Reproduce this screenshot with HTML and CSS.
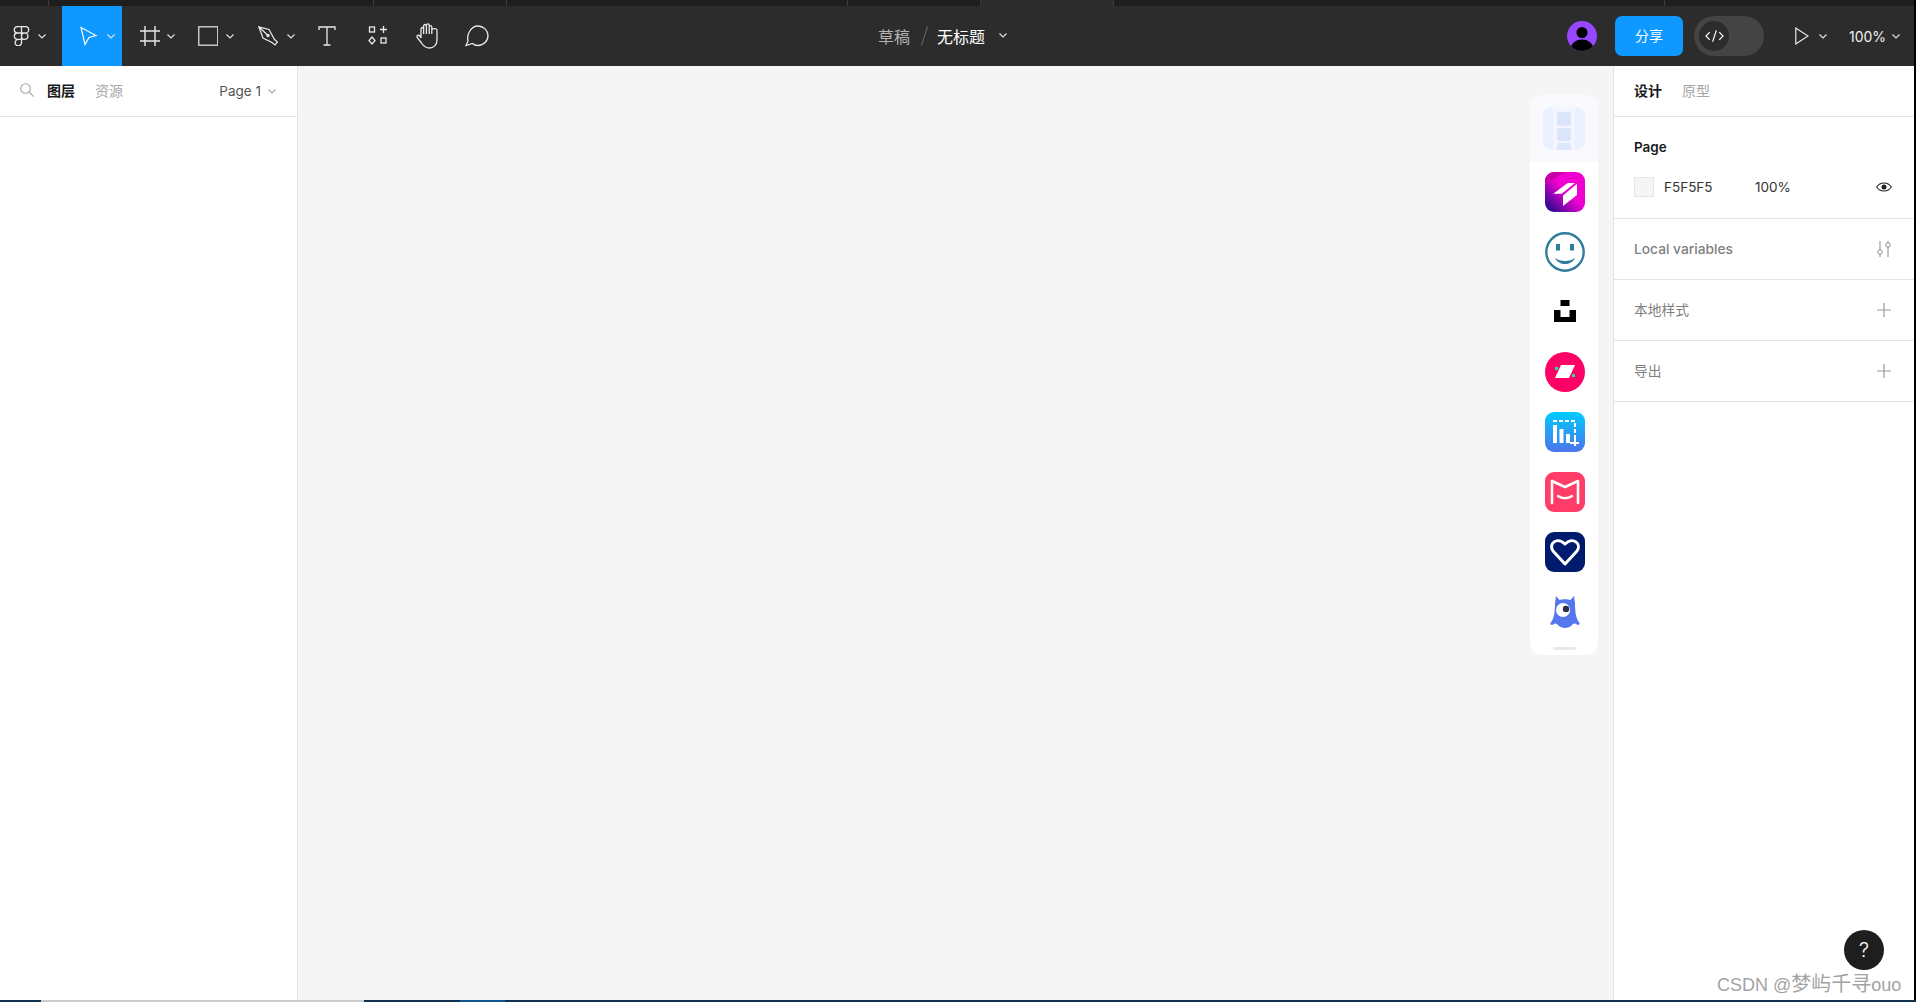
FILE: index.html
```html
<!DOCTYPE html>
<html lang="en">
<head>
    <meta charset="UTF-8">
    <meta name="viewport" content="width=device-width, initial-scale=1.0">
    <title>无标题 - Figma</title>
    <link rel="stylesheet" href="styles.css">
</head>
<body>
    <div class="window">
        <!-- browser tabs peeking out at the top -->
        <div class="tab-strip">
            <div class="strip-tab tab-a"></div>
            <div class="strip-tab tab-b"></div>
            <div class="strip-tab tab-c"></div>
            <div class="strip-tab tab-d"></div>
            <div class="strip-tab tab-c"></div>
            <div class="strip-tab tab-c tab-active"></div>
            <div class="strip-tab tab-e"></div>
            <div class="strip-tab tab-f"></div>
        </div>

        <header class="toolbar">
            <div class="tools">
                <div class="tool tool-logo">
                    <svg class="icon" viewBox="0 0 20 20" fill="none" stroke="#e8e8e8" stroke-width="1.3">
                        <path d="M6.500 .6H10.500V7H6.500A3.200 3.200 0 0 1 6.500 .6ZM10.500 .6H14.500A3.200 3.200 0 0 1 14.500 7H10.500ZM6.500 7H10.500V13.400H6.500A3.200 3.200 0 0 1 6.500 7ZM17 10.200A3.250 3.250 0 1 1 10.500 10.200A3.250 3.250 0 1 1 17 10.200ZM7.250 13.400H10.500V16.400A3.200 3.200 0 1 1 7.250 13.400Z"/>
                    </svg>
                    <svg class="chevron" viewBox="0 0 8 5"><path d="M.5.5 4 4 7.5.5"/></svg>
                </div>
                <div class="tool tool-move">
                    <svg class="icon" viewBox="0 0 20 20" fill="none" stroke="#fff" stroke-width="1.2">
                        <path d="M3 1.5 18 9.5 11 11.5 7 18.5Z"/>
                    </svg>
                    <svg class="chevron" viewBox="0 0 8 5"><path d="M.5.5 4 4 7.5.5"/></svg>
                </div>
                <div class="tool tool-frame">
                    <svg class="icon" viewBox="0 0 20 20" fill="none" stroke="#e8e8e8" stroke-width="1.4">
                        <path d="M5 0V20M15 0V20M0 5H20M0 15H20"/>
                    </svg>
                    <svg class="chevron" viewBox="0 0 8 5"><path d="M.5.5 4 4 7.5.5"/></svg>
                </div>
                <div class="tool tool-shape">
                    <svg class="icon" viewBox="0 0 20 20" fill="none" stroke="#c4c4c4" stroke-width="1.5">
                        <rect x="0.75" y="0.75" width="19" height="18.5"/>
                    </svg>
                    <svg class="chevron" viewBox="0 0 8 5"><path d="M.5.5 4 4 7.5.5"/></svg>
                </div>
                <div class="tool tool-pen">
                    <svg class="icon" viewBox="0 0 20 20" fill="none" stroke="#e8e8e8" stroke-width="1.2">
                        <path d="M.8.8 11 3.500 16.500 13.500 19.500 16 17 19 14 16.500 5 12 .8.8ZM.8.8 9.500 9"/>
                        <circle cx="10" cy="9.500" r="1.100" fill="#e8e8e8"/>
                    </svg>
                    <svg class="chevron" viewBox="0 0 8 5"><path d="M.5.5 4 4 7.5.5"/></svg>
                </div>
                <div class="tool tool-single tool-text">
                    <svg class="icon" viewBox="0 0 20 20" fill="none" stroke="#e8e8e8" stroke-width="1.3">
                        <path d="M2 4V1H18V4M10 1V19M6.500 19H13.500"/>
                    </svg>
                </div>
                <div class="tool tool-single tool-comps">
                    <svg class="icon" viewBox="0 0 20 20" fill="none" stroke="#e8e8e8" stroke-width="1.3">
                        <rect x="1.500" y="1" width="5" height="5"/>
                        <rect x="13" y="12" width="5" height="5"/>
                        <path d="M15.500 0V7M12 3.500H19M4 11 7 14.500 4 18 1 14.500Z"/>
                    </svg>
                </div>
                <div class="tool tool-single tool-hand">
                    <svg class="icon icon-hand" viewBox="0 0 22 26" fill="none" stroke="#e8e8e8" stroke-width="1.3">
                        <path d="M5 15V6C5 4 7.600 4 7.600 6V11M7.600 11V3C7.600 1 10.400 1 10.400 3V11M10.400 11V2.200C10.400 .4 13.200 .4 13.200 2.200V11M13.200 11V4C13.200 2.200 15.800 2.200 15.800 4V11M15.800 11V7C15.800 5.400 21 4.800 21 7.500V17C21 22 17.500 25 13.500 25 9.500 25 7.500 23 5.500 20L1.200 14.500C.2 12.500 2.600 11.500 4 13L5 15"/>
                    </svg>
                </div>
                <div class="tool tool-single tool-comment">
                    <svg class="icon icon-comment" viewBox="0 0 24 22" fill="none" stroke="#e8e8e8" stroke-width="1.3">
                        <path d="M1 20.500 3 16C1.500 10 5.500 1 13 1 18.500 1 23 5.500 23 10.500 23 16 18.500 20.500 13 20.500 10.500 20.500 8.500 19.500 7.500 18.500Z"/>
                    </svg>
                </div>
            </div>

            <div class="file-title">
                <span class="crumb-folder">草稿</span>
                <span class="crumb-slash"></span>
                <span class="crumb-name">无标题</span>
                <svg class="chevron" viewBox="0 0 8 5"><path d="M.5.5 4 4 7.5.5"/></svg>
            </div>

            <div class="actions">
                <svg class="avatar" viewBox="0 0 30 30">
                    <defs><clipPath id="avatarClip"><circle cx="15" cy="15" r="15"/></clipPath></defs>
                    <circle cx="15" cy="15" r="15" fill="#9747ff"/>
                    <g clip-path="url(#avatarClip)">
                        <circle cx="15" cy="11.500" r="5.500" fill="#000"/>
                        <ellipse cx="15" cy="27" rx="11" ry="8.500" fill="#000"/>
                    </g>
                </svg>
                <button class="share-btn">分享</button>
                <div class="dev-toggle">
                    <div class="dev-knob">
                        <svg class="dev-icon" viewBox="0 0 20 12" fill="none" stroke="#fff" stroke-width="1.200">
                            <path d="M5 2 1 6 5 10M15 2 19 6 15 10M12 0 8 12"/>
                        </svg>
                    </div>
                </div>
                <div class="present">
                    <svg class="play-icon" viewBox="0 0 14 18" fill="none" stroke="#e8e8e8" stroke-width="1.200">
                        <path d="M.8 1 13 9 .8 17Z"/>
                    </svg>
                    <svg class="chevron" viewBox="0 0 8 5"><path d="M.5.5 4 4 7.5.5"/></svg>
                </div>
                <div class="zoom-level">
                    <span class="zoom-text">100%</span>
                    <svg class="chevron" viewBox="0 0 8 5"><path d="M.5.5 4 4 7.5.5"/></svg>
                </div>
            </div>
        </header>

        <main class="workspace">
            <aside class="left-panel">
                <div class="panel-head">
                    <svg class="search-icon" viewBox="0 0 14 14" fill="none" stroke="#a6a6a6" stroke-width="1.100">
                        <circle cx="5.500" cy="5.500" r="4.800"/>
                        <path d="M9 9 13.600 13.600"/>
                    </svg>
                    <span class="tab-label tab-on">图层</span>
                    <span class="tab-label tab-off">资源</span>
                    <div class="page-pick">
                        <span>Page 1</span>
                        <svg class="chevron chevron-grey" viewBox="0 0 8 5"><path d="M.5.5 4 4 7.5.5"/></svg>
                    </div>
                </div>
            </aside>

            <section class="canvas">
                <div class="plugin-bar">
                    <div class="plugin plugin-first">
                        <svg class="plugin-icon icon-wide" viewBox="0 0 42 43">
                            <rect width="42" height="43" rx="9" fill="#e9f0fe"/>
                            <rect x="10" width="22" height="43" fill="#f3f6fe"/>
                            <rect x="14" y="5" width="14" height="14" rx="3" fill="#dbe6fd"/>
                            <rect x="14" y="21" width="14" height="13" rx="3" fill="#dbe6fd"/>
                            <path d="M14 43V39C14 37 15 36 17 36H25C27 36 28 37 28 39V43Z" fill="#dbe6fd"/>
                        </svg>
                    </div>
                    <div class="plugin">
                        <svg class="plugin-icon" viewBox="0 0 40 40">
                            <defs>
                                <linearGradient id="magenta" x1="0.9" y1="0.1" x2="0.1" y2="0.95">
                                    <stop offset="0.45" stop-color="#f000d0"/>
                                    <stop offset="1" stop-color="#2a0a90"/>
                                </linearGradient>
                            </defs>
                            <rect width="40" height="40" rx="9" fill="url(#magenta)"/>
                            <path d="M0 12 0 9A9 9 0 0 1 9 0H20Z" fill="#c800a8"/>
                            <path d="M8.300 21.700 22.700 11H30L16.700 21.700ZM32 11.700V23L18 34V23.500Z" fill="#fff"/>
                        </svg>
                    </div>
                    <div class="plugin">
                        <svg class="plugin-icon" viewBox="0 0 40 40" fill="none" stroke="#2e7d9c">
                            <circle cx="20" cy="20" r="18.700" stroke-width="2.400"/>
                            <path d="M13 12V18.500M27 12V18.500" stroke-width="4"/>
                            <path d="M10 26C15 30 25 30 30 26 26 34 14 34 10 26Z" fill="#2e7d9c" stroke="none"/>
                        </svg>
                    </div>
                    <div class="plugin">
                        <svg class="plugin-icon" viewBox="0 0 40 40">
                            <path d="M15.500 8H24.500V14H15.500ZM9 18H15.500V25H24.500V18H31V30H9Z" fill="#000"/>
                        </svg>
                    </div>
                    <div class="plugin">
                        <svg class="plugin-icon" viewBox="0 0 40 40">
                            <circle cx="20" cy="20" r="20" fill="#ff0066"/>
                            <path d="M16 13H30L24 26H10Z" fill="#fff"/>
                            <rect x="10" y="15" width="3" height="3" fill="#1fe6a0"/>
                            <rect x="27" y="22" width="3" height="3" fill="#1fe6a0"/>
                        </svg>
                    </div>
                    <div class="plugin">
                        <svg class="plugin-icon" viewBox="0 0 40 40">
                            <defs>
                                <linearGradient id="skyblue" x1="0.5" y1="0" x2="0.5" y2="1">
                                    <stop offset="0" stop-color="#00ccff"/>
                                    <stop offset="1" stop-color="#4d74ea"/>
                                </linearGradient>
                            </defs>
                            <rect width="40" height="40" rx="9" fill="url(#skyblue)"/>
                            <path d="M8 9H30V25" fill="none" stroke="#fff" stroke-width="2" stroke-dasharray="4 2"/>
                            <path d="M8 13H12V31H8ZM14.500 17H18.500V31H14.500ZM21 22H25V31H21Z" fill="#fff"/>
                            <path d="M30 25V34M25 31H34" stroke="#fff" stroke-width="2"/>
                        </svg>
                    </div>
                    <div class="plugin">
                        <svg class="plugin-icon" viewBox="0 0 40 40" fill="none" stroke="#fff" stroke-linecap="round">
                            <rect width="40" height="40" rx="9" fill="#ff3d68" stroke="none"/>
                            <path d="M7 31V9L20 15 33 9V31" stroke-width="2.600" stroke-linejoin="round"/>
                            <path d="M13 24C17 27 23 27 27 24" stroke-width="2.400"/>
                        </svg>
                    </div>
                    <div class="plugin">
                        <svg class="plugin-icon" viewBox="0 0 40 40">
                            <rect width="40" height="40" rx="9" fill="#001a6e"/>
                            <path d="M20 32 8 19C3 12 12 4 20 12 28 4 37 12 32 19Z" fill="none" stroke="#fff" stroke-width="3" stroke-linejoin="round"/>
                        </svg>
                    </div>
                    <div class="plugin">
                        <svg class="plugin-icon" viewBox="0 0 40 40">
                            <path d="M11 4 14.500 8C17 7 23 7 25.500 8L29 4 30 11C30 20 31 27 34.500 31 35 33 33 33.500 31 32 29 31 28 32 26 34 23 36.500 17 36.500 14 34 12 32 11 31 9 32 7 33.500 5 33 5.500 31 9 27 10 20 10 11Z" fill="#5577ee"/>
                            <circle cx="18" cy="18" r="7" fill="#fff"/>
                            <circle cx="21" cy="17" r="3.200" fill="#2b2f45"/>
                        </svg>
                    </div>
                    <div class="plugin-handle"></div>
                </div>
            </section>

            <aside class="right-panel">
                <div class="panel-head panel-head-right">
                    <span class="tab-label tab-on">设计</span>
                    <span class="tab-label tab-off">原型</span>
                </div>
                <div class="page-section">
                    <div class="section-title">Page</div>
                    <div class="fill-row">
                        <div class="swatch"></div>
                        <span class="fill-hex">F5F5F5</span>
                        <span class="fill-opacity">100%</span>
                        <svg class="eye-icon" viewBox="0 0 16 10">
                            <path d="M.7 5C4 -.3 12 -.3 15.300 5 12 10.300 4 10.300 .7 5Z" fill="none" stroke="#222" stroke-width="1.100"/>
                            <circle cx="8" cy="5" r="2.500" fill="#222"/>
                        </svg>
                    </div>
                </div>
                <div class="side-row">
                    <span class="side-label">Local variables</span>
                    <svg class="row-icon" viewBox="0 0 16 18" fill="none" stroke="#888" stroke-width="1.100">
                        <path d="M3.500 0V10M3.500 15V18M12.500 0V2M12.500 7V18"/>
                        <circle cx="3.500" cy="12.500" r="2.500"/>
                        <circle cx="12.500" cy="4.500" r="2.500"/>
                    </svg>
                </div>
                <div class="side-row">
                    <span class="side-label label-cn">本地样式</span>
                    <svg class="row-icon" viewBox="0 0 16 16" stroke="#999" stroke-width="1.200"><path d="M8 1V15M1 8H15"/></svg>
                </div>
                <div class="side-row">
                    <span class="side-label label-cn">导出</span>
                    <svg class="row-icon" viewBox="0 0 16 16" stroke="#999" stroke-width="1.200"><path d="M8 1V15M1 8H15"/></svg>
                </div>
            </aside>
        </main>

        <div class="help-btn">?</div>
        <div class="watermark">CSDN @<span class="watermark-cn">梦屿千寻</span>ouo</div>
    </div>

    <!-- bit of the taskbar showing under the window -->
    <div class="bottom-strip">
        <div class="bottom-a"></div>
        <div class="bottom-b"></div>
        <div class="bottom-c"></div>
        <div class="bottom-d"></div>
        <div class="bottom-e"></div>
    </div>
</body>
</html>
```

FILE: styles.css
```css
* {
    box-sizing: border-box;
}

html, body {
    margin: 0;
    height: 100%;
}

body {
    display: flex;
    flex-direction: column;
    overflow: hidden;
    background: #000;
    font-family: Inter, "Noto Sans CJK SC", sans-serif;
}

.window {
    position: relative;
    flex: 1;
    display: flex;
    flex-direction: column;
    min-height: 0;
    margin-right: 2px;
}

/* top strip */
.tab-strip {
    display: flex;
    height: 6px;
    flex: none;
    background: #1e1e1e;
}

.strip-tab {
    flex: none;
    border-right: 1px solid #3a3a3a;
}

.tab-a { width: 49px; }
.tab-b { width: 325px; }
.tab-c { width: 133px; }
.tab-d { width: 341px; }
.tab-e { width: 551px; }
.tab-f { flex: 1; border-right: none; }

.tab-active {
    background: #2c2c2c;
}

/* toolbar */
.toolbar {
    display: grid;
    grid-template-columns: 878px auto 1fr;
    align-items: center;
    height: 60px;
    flex: none;
    background: #2c2c2c;
    color: #fff;
}

.tools {
    display: flex;
    height: 60px;
}

.tool {
    display: flex;
    align-items: center;
    height: 60px;
    gap: 8px;
}

.icon {
    width: 20px;
    height: 20px;
    flex: none;
}

.chevron {
    width: 8px;
    height: 5px;
    flex: none;
    fill: none;
    stroke: #e0e0e0;
    stroke-width: 1.2;
}

.chevron-grey {
    stroke: #aaa;
}

.tool-logo { width: 62px; padding-left: 11px; gap: 7px; }
.tool-move { width: 60px; padding-left: 16px; gap: 9px; background: #0d99ff; }
.tool-frame { width: 60px; padding-left: 18px; gap: 7px; }
.tool-shape { width: 60px; padding-left: 16px; }
.tool-pen { width: 60px; padding-left: 16px; gap: 9px; }
.tool-text { width: 50px; padding-left: 15px; }
.tool-comps { width: 50px; padding-left: 16px; }
.tool-hand { width: 50px; padding-left: 14px; }
.tool-comment { width: 50px; padding-left: 13px; }

.icon-hand {
    width: 22px;
    height: 26px;
}

.icon-comment {
    width: 24px;
    height: 22px;
}

.file-title {
    display: flex;
    align-items: center;
    font-size: 16px;
    padding-bottom: 1px;
}

.crumb-folder {
    color: #b3b3b3;
}

.crumb-slash {
    width: 1px;
    height: 20px;
    margin: 0 12px 0 14px;
    background: #666;
    transform: rotate(18deg);
}

.crumb-name {
    color: #fff;
    margin-right: 14px;
}

.actions {
    display: flex;
    align-items: center;
    justify-content: flex-end;
    padding-right: 14px;
}

.avatar {
    width: 30px;
    height: 30px;
    flex: none;
    margin-right: 18px;
}

.share-btn {
    width: 68px;
    height: 40px;
    border: none;
    border-radius: 7px;
    background: #0d99ff;
    color: #fff;
    font-family: inherit;
    font-size: 14px;
    padding: 0 0 2px;
    margin-right: 11px;
}

.dev-toggle {
    display: flex;
    align-items: center;
    width: 70px;
    height: 40px;
    padding-left: 5px;
    border-radius: 20px;
    background: #444;
    margin-right: 31px;
}

.dev-knob {
    display: flex;
    align-items: center;
    justify-content: center;
    width: 30px;
    height: 30px;
    border-radius: 50%;
    background: #2c2c2c;
}

.dev-icon {
    width: 19px;
    height: 12px;
}

.present {
    display: flex;
    align-items: center;
    gap: 10px;
    margin-right: 22px;
}

.play-icon {
    width: 14px;
    height: 18px;
}

.zoom-level {
    display: flex;
    align-items: center;
    gap: 8px;
    font-size: 14px;
    color: #f0f0f0;
}

.zoom-text {
    width: 35px;
    white-space: nowrap;
}

/* main area */
.workspace {
    flex: 1;
    display: flex;
    min-height: 0;
}

.left-panel {
    width: 298px;
    flex: none;
    background: #fff;
    border-right: 1px solid #e5e5e5;
}

.panel-head {
    display: flex;
    align-items: center;
    height: 51px;
    padding: 0 21px 2px 20px;
    border-bottom: 1px solid #e5e5e5;
}

.search-icon {
    width: 14px;
    height: 14px;
    margin-right: 13px;
}

.tab-label {
    font-size: 14px;
    margin-right: 20px;
}

.tab-on {
    color: #1a1a1a;
    font-weight: 700;
}

.tab-off {
    color: #a6a6a6;
}

.page-pick {
    display: flex;
    align-items: center;
    gap: 7px;
    margin-left: auto;
    padding-top: 2px;
    font-size: 13.5px;
    color: #555;
}

.canvas {
    flex: 1;
    display: flex;
    justify-content: flex-end;
    align-items: flex-start;
    padding: 29px 15px 0 0;
    background: #f5f5f5;
}

.plugin-bar {
    width: 68px;
    height: 560px;
    display: flex;
    flex-direction: column;
    align-items: center;
    border-radius: 12px;
    overflow: hidden;
    background: #fff;
}

.plugin {
    display: flex;
    align-items: center;
    justify-content: center;
    flex: none;
    width: 100%;
    height: 60px;
    padding-left: 2px;
}

.plugin-first {
    height: 67px;
    background: #f9f9fe;
    padding-left: 0;
}

.plugin-icon {
    width: 40px;
    height: 40px;
    flex: none;
}

.icon-wide {
    width: 42px;
    height: 43px;
}

.plugin-handle {
    width: 23px;
    height: 3px;
    margin-top: 5px;
    border-radius: 2px;
    background: #e8e8ef;
}

.right-panel {
    width: 301px;
    flex: none;
    background: #fff;
    border-left: 1px solid #e5e5e5;
}

.page-section {
    height: 102px;
    padding: 20px 22px 0 20px;
    border-bottom: 1px solid #e5e5e5;
}

.section-title {
    font-size: 13.5px;
    font-weight: 600;
    line-height: 20px;
    color: #1a1a1a;
}

.fill-row {
    display: flex;
    align-items: center;
    height: 20px;
    margin-top: 20px;
    font-size: 13.5px;
    color: #333;
}

.swatch {
    width: 20px;
    height: 20px;
    background: #f5f5f5;
    border: 1px solid #e5e5e5;
    margin-right: 10px;
}

.fill-hex {
    width: 91px;
}

.eye-icon {
    width: 16px;
    height: 10px;
    margin-left: auto;
}

.side-row {
    display: flex;
    align-items: center;
    justify-content: space-between;
    height: 61px;
    padding: 0 22px 0 20px;
    border-bottom: 1px solid #e5e5e5;
}

.side-label {
    font-size: 13.75px;
    font-weight: 500;
    color: #7f7f7f;
}

.label-cn {
    font-weight: 400;
    padding-bottom: 2px;
}

.row-icon {
    width: 16px;
    height: 16px;
    flex: none;
}

/* overlays */
.help-btn {
    position: absolute;
    left: 1844px;
    top: 930px;
    width: 40px;
    height: 40px;
    border-radius: 50%;
    background: #1e1e1e;
    color: #fff;
    font-size: 20px;
    font-weight: 300;
    line-height: 40px;
    text-align: center;
}

.watermark {
    position: absolute;
    left: 1717px;
    top: 971px;
    font-family: "Liberation Sans", "Noto Sans CJK SC", sans-serif;
    font-size: 18px;
    line-height: 26px;
    white-space: nowrap;
    color: #a3a3a3;
}

.watermark-cn {
    font-size: 20px;
}

.bottom-strip {
    display: flex;
    height: 2px;
    flex: none;
    background: #12304f;
}

.bottom-a { width: 41px; }
.bottom-b { width: 323px; background: #cccccc; }
.bottom-c { width: 96px; }
.bottom-d { width: 45px; background: #0f5390; }
.bottom-e { flex: 1; }
```
